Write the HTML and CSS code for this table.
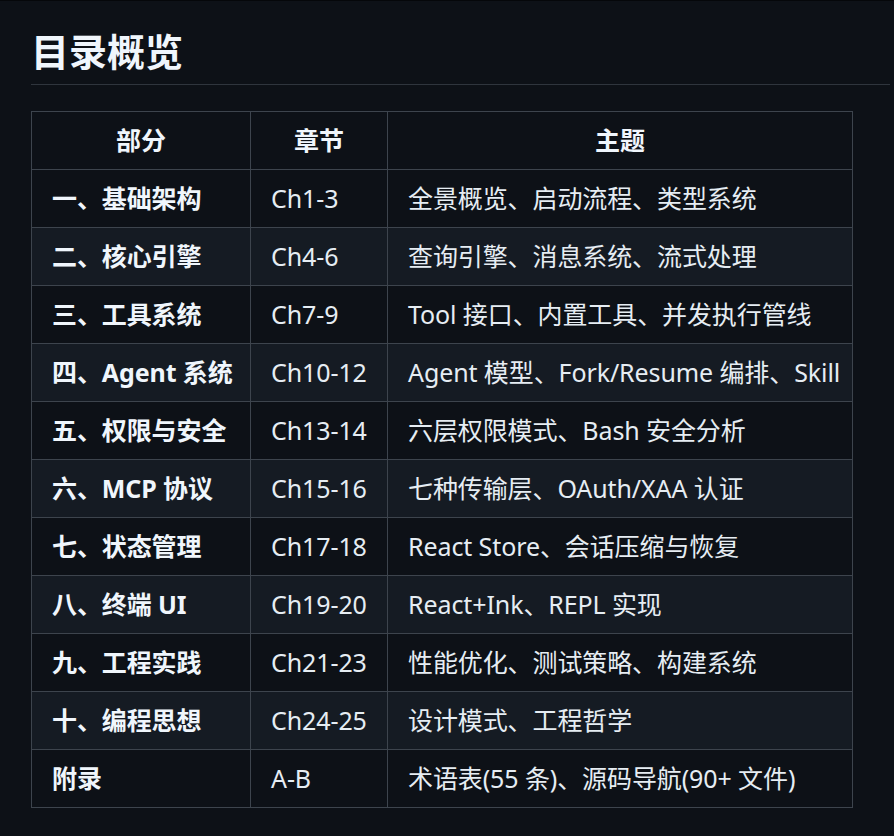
FILE: index.html
```html
<!DOCTYPE html>
<html lang="zh-CN">
<head>
<meta charset="utf-8">
<title>目录概览</title>
<link rel="stylesheet" href="styles.css">
</head>
<body>
<main class="doc">
  <h1 class="doc-title">目录概览</h1>
  <table class="toc">
    <colgroup>
      <col class="c-part">
      <col class="c-ch">
      <col class="c-topic">
    </colgroup>
    <thead>
      <tr><th>部分</th><th>章节</th><th>主题</th></tr>
    </thead>
    <tbody>
      <tr><td class="part">一、基础架构</td><td>Ch1-3</td><td>全景概览、启动流程、类型系统</td></tr>
      <tr><td class="part">二、核心引擎</td><td>Ch4-6</td><td>查询引擎、消息系统、流式处理</td></tr>
      <tr><td class="part">三、工具系统</td><td>Ch7-9</td><td>Tool 接口、内置工具、并发执行管线</td></tr>
      <tr><td class="part">四、Agent 系统</td><td>Ch10-12</td><td>Agent 模型、Fork/Resume 编排、Skill</td></tr>
      <tr><td class="part">五、权限与安全</td><td>Ch13-14</td><td>六层权限模式、Bash 安全分析</td></tr>
      <tr><td class="part">六、MCP 协议</td><td>Ch15-16</td><td>七种传输层、OAuth/XAA 认证</td></tr>
      <tr><td class="part">七、状态管理</td><td>Ch17-18</td><td>React Store、会话压缩与恢复</td></tr>
      <tr><td class="part">八、终端 UI</td><td>Ch19-20</td><td>React+Ink、REPL 实现</td></tr>
      <tr><td class="part">九、工程实践</td><td>Ch21-23</td><td>性能优化、测试策略、构建系统</td></tr>
      <tr><td class="part">十、编程思想</td><td>Ch24-25</td><td>设计模式、工程哲学</td></tr>
      <tr><td class="part">附录</td><td>A-B</td><td>术语表(55 条)、源码导航(90+ 文件)</td></tr>
    </tbody>
  </table>
</main>
</body>
</html>
```

FILE: styles.css
```css
html, body {
  margin: 0;
  padding: 0;
  background: #0d1117;
}

body {
  border-top: 1px solid #05070a;
  color: #e6edf3;
  font-family: "Noto Sans", "Noto Sans CJK SC", sans-serif;
}

.doc {
  padding: 27px 4px 0 31px;
}

.doc-title {
  margin: 0;
  padding-bottom: 10px;
  border-bottom: 1px solid #2f353d;
  font-size: 38px;
  line-height: 46px;
  font-weight: 700;
  color: #f0f6fc;
}

.toc {
  margin-top: 26px;
  border-collapse: collapse;
  table-layout: fixed;
  width: 821px;
  font-size: 25px;
  line-height: 37px;
}

.c-part { width: 219px; }
.c-ch { width: 137px; }
.c-topic { width: 465px; }

.toc th,
.toc td {
  border: 1px solid #3d444d;
  padding: 10px 20px;
  text-align: left;
  white-space: nowrap;
  letter-spacing: -0.1px;
}

.toc th {
  text-align: center;
  font-weight: 700;
  color: #f0f6fc;
}

.toc td.part {
  font-weight: 700;
  color: #f0f6fc;
}

.toc tbody tr:nth-child(2n) {
  background: #151b23;
}
```
